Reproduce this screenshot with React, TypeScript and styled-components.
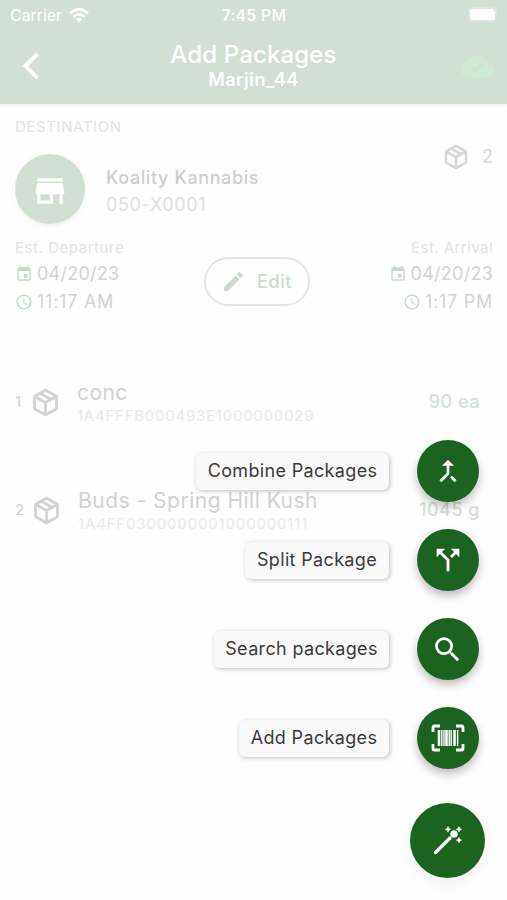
import React from "react";
import styled, { createGlobalStyle } from "styled-components";
import {
  MdAccessTime,
  MdCallMerge,
  MdCallSplit,
  MdCloudDone,
  MdEdit,
  MdEvent,
  MdSearch,
  MdStore,
} from "react-icons/md";

const Global = createGlobalStyle`
  *, *::before, *::after { box-sizing: border-box; }
  body { margin: 0; background: #fefefe; font-family: Inter, "Liberation Sans", sans-serif; }
  svg { display: block; flex: none; }
`;

const Screen = styled.main`
  position: relative;
  width: 507px;
  height: 900px;
  overflow: hidden;
  background: #fefefe;
`;

const Header = styled.header`
  height: 104px;
  background: #d2dfd3;
  color: #fff;
  box-shadow: 0 1px 4px rgba(0, 0, 0, 0.08);
`;

const StatusBar = styled.div`
  display: grid;
  grid-template-columns: 1fr auto 1fr;
  align-items: center;
  height: 30px;
  padding: 0 9px 0 10px;
`;

const Carrier = styled.div`
  display: flex;
  align-items: center;
  gap: 7px;
`;

const Battery = styled.div`
  justify-self: end;
  width: 29px;
  height: 15px;
  margin: -2px 1px 0 0;
  border: 2px solid #d9e8da;
  border-radius: 5px;
  background: #fff;
`;

const TitleBar = styled.div`
  display: grid;
  grid-template-columns: 60px 1fr 60px;
  align-items: center;
  height: 72px;
`;

const Titles = styled.div`
  display: flex;
  flex-direction: column;
  align-items: center;
  padding-top: 2px;
`;

const Side = styled.div<{ $end?: boolean }>`
  display: flex;
  justify-content: ${(p) => (p.$end ? "flex-end" : "flex-start")};
  padding: ${(p) => (p.$end ? "0 13px 0 0" : "0 0 0 21px")};
  color: #d0e9d3;
`;

const Label = styled.span<{
  $size: number;
  $line?: number;
  $color?: string;
  $weight?: number;
  $spacing?: number;
}>`
  font-size: ${(p) => p.$size}px;
  line-height: ${(p) => p.$line ?? 24}px;
  color: ${(p) => p.$color ?? "inherit"};
  font-weight: ${(p) => p.$weight ?? 400};
  letter-spacing: ${(p) => p.$spacing ?? 0}px;
  white-space: nowrap;
`;

const Destination = styled.section`
  display: flex;
  flex-direction: column;
  height: 134px;
  padding: 12px 14px 0 15px;
`;

const PlaceRow = styled.div`
  display: flex;
  align-items: flex-start;
  padding-top: 17px;
`;

const StoreBadge = styled.div`
  display: flex;
  align-items: center;
  justify-content: center;
  width: 70px;
  height: 70px;
  border-radius: 50%;
  background: #d1dfd2;
  color: #fff;
  box-shadow: 0 2px 4px rgba(0, 0, 0, 0.06);

  > svg { margin-top: 3px; }
`;

const PlaceText = styled.div`
  display: flex;
  flex: 1;
  flex-direction: column;
  gap: 3px;
  padding: 12px 0 0 21px;
`;

const Count = styled.div`
  display: flex;
  align-items: center;
  gap: 11px;
  margin-top: -12px;
  color: #d6d6d6;
`;

const Schedule = styled.section`
  display: grid;
  grid-template-columns: 1fr 106px 1fr;
  height: 130px;
  padding: 0 14px 0 15px;
`;

const Times = styled.div<{ $end?: boolean }>`
  display: flex;
  flex-direction: column;
  align-items: ${(p) => (p.$end ? "flex-end" : "flex-start")};

  > :first-child { margin-bottom: 2px; }
`;

const TimeRow = styled.div`
  display: flex;
  align-items: center;
  gap: 4px;
  height: 28px;
  color: #c9dccb;
`;

const EditButton = styled.button`
  display: flex;
  align-items: center;
  gap: 11px;
  width: 106px;
  height: 49px;
  margin: 19px 0 0 3px;
  padding: 0 0 0 15px;
  border: 2px solid #dfe9e0;
  border-radius: 25px;
  background: transparent;
  color: #cddbce;
  font-family: inherit;
`;

const PackageRow = styled.article<{ $first?: boolean }>`
  display: flex;
  align-items: flex-start;
  height: 108px;
  padding: 11px 27px 0 15px;
  color: #d2d2d2;

  > svg { margin: 7px 0 0 ${(p) => (p.$first ? 5 : 6)}px; }
`;

const Index = styled.div`
  width: 9px;
  padding-top: 11px;
`;

const PackageText = styled.div`
  display: flex;
  flex: 1;
  flex-direction: column;
  padding-left: 15px;
`;

const Amount = styled.div`
  padding-top: 11px;
`;

const SpeedDial = styled.nav`
  position: absolute;
  right: 22px;
  bottom: 22px;
  display: flex;
  flex-direction: column;
  align-items: flex-end;
`;

const Action = styled.div`
  display: flex;
  align-items: center;
  gap: 28px;
  height: 62px;
  margin: 0 6px 27px 0;
`;

const ActionLabel = styled.div<{ $width: number }>`
  display: flex;
  align-items: center;
  justify-content: center;
  width: ${(p) => p.$width}px;
  height: 37px;
  border-radius: 6px;
  background: #fafafa;
  box-shadow: 1px 1px 4px rgba(0, 0, 0, 0.26);
`;

const RoundButton = styled.button<{ $size: number }>`
  display: flex;
  align-items: center;
  justify-content: center;
  width: ${(p) => p.$size}px;
  height: ${(p) => p.$size}px;
  padding: 0;
  border: 0;
  border-radius: 50%;
  background: #1b6420;
  color: #fff;
  box-shadow: ${(p) =>
    p.$size > 70 ? "0 6px 14px rgba(0,0,0,0.05)" : "0 5px 9px rgba(0,0,0,0.25)"};

  > svg {
    margin-right: 1px;
  }
`;

const MainButton = styled(RoundButton)`
  margin-top: 7px;
`;

const BoxIcon = ({ size }: { size: number }) => (
  <svg width={size} height={size} viewBox="0 0 24 24" fill="currentColor">
    <path d="M21,16.5C21,16.88 20.79,17.21 20.47,17.38L12.57,21.82C12.41,21.94 12.21,22 12,22C11.79,22 11.59,21.94 11.43,21.82L3.53,17.38C3.21,17.21 3,16.88 3,16.5V7.5C3,7.12 3.21,6.79 3.53,6.62L11.43,2.18C11.59,2.06 11.79,2 12,2C12.21,2 12.41,2.06 12.57,2.18L20.47,6.62C20.79,6.79 21,7.12 21,7.5V16.5M12,4.15L10.11,5.22L16,8.61L17.96,7.5L12,4.15M6.04,7.5L12,10.85L13.96,9.75L8.08,6.35L6.04,7.5M5,15.91L11,19.29V12.58L5,9.21V15.91M19,15.91V9.21L13,12.58V19.29L19,15.91Z" />
  </svg>
);

const BackIcon = () => (
  <svg width="20" height="28" viewBox="0 0 20 28" fill="none" stroke="#fff" strokeWidth="4">
    <path d="M16.5 2L4.5 14L16.5 26" />
  </svg>
);

const WifiIcon = () => (
  <svg width="20" height="15" viewBox="0 0 20 15" fill="none" stroke="#fff" strokeWidth="2.7">
    <path d="M1 5.3Q10-2.3 19 5.3M4.2 8.8Q10 3.8 15.8 8.8" />
    <path d="M6.8 11.2Q10 8.5 13.2 11.2L10 14.5Z" fill="#fff" stroke="none" />
  </svg>
);

const BarcodeIcon = () => (
  <svg width="34" height="28" viewBox="0 0 34 28" fill="none" stroke="#fff">
    <path
      d="M2 8V3.5Q2 2 3.5 2H9M25 2h5.5Q32 2 32 3.5V8M32 20v4.5Q32 26 30.5 26H25M9 26H3.5Q2 26 2 24.5V20"
      strokeWidth="2.8"
    />
    <path d="M8 6v16M15.5 6v16M23.5 6v16" strokeWidth="2.6" />
    <path d="M10.8 6v16M13 6v16M18.2 6v16M20.2 6v16M26.6 6v16" strokeWidth="1.4" />
  </svg>
);

const WandIcon = () => (
  <svg width="30" height="30" viewBox="0 0 30 30" fill="#fff" stroke="#fff">
    <path d="M3.5 26.5L18 12" strokeWidth="3.2" strokeLinecap="round" />
    <circle cx="22" cy="8" r="3.5" strokeWidth="0.4" />
    <path
      d="M16 .5l.9 1.9 1.9.9-1.9.9-.9 1.9-.9-1.9-1.9-.9 1.9-.9zM27 .5l.9 1.9 1.9.9-1.9.9-.9 1.9-.9-1.9-1.9-.9 1.9-.9zM27 11.3l.9 1.9 1.9.9-1.9.9-.9 1.9-.9-1.9-1.9-.9 1.9-.9z"
      strokeWidth="0.5"
    />
  </svg>
);

const actions = [
  { text: "Combine Packages", width: 193, icon: <MdCallMerge size={32} /> },
  { text: "Split Package", width: 144, icon: <MdCallSplit size={34} /> },
  { text: "Search packages", width: 175, icon: <MdSearch size={33} /> },
  { text: "Add Packages", width: 150, icon: <BarcodeIcon /> },
];

const packages = [
  { name: "conc", tag: "1A4FFFB000493E1000000029", amount: "90 ea", nameSpacing: 0.4, tagSpacing: 0.76 },
  { name: "Buds - Spring Hill Kush", tag: "1A4FF0300000001000000111", amount: "1045 g", nameSpacing: 0.5, tagSpacing: 0.84 },
];

const TimeBlock = (p: { title: string; date: string; time: string; end?: boolean }) => (
  <Times $end={p.end}>
    <Label $size={15} $line={20} $color="#e3e3e3" $spacing={p.end ? 0.45 : 0.55}>{p.title}</Label>
    <TimeRow>
      <MdEvent size={18} />
      <Label $size={18} $color="#d3d3d3" $spacing={0.25}>{p.date}</Label>
    </TimeRow>
    <TimeRow>
      <MdAccessTime size={18} />
      <Label $size={18} $color="#d3d3d3" $spacing={0.75}>{p.time}</Label>
    </TimeRow>
  </Times>
);

export default function App() {
  return (
    <Screen>
      <Global />
      <Header>
        <StatusBar>
          <Carrier>
            <Label $size={16} $spacing={-0.05}>Carrier</Label>
            <WifiIcon />
          </Carrier>
          <Label $size={16} $weight={500} $spacing={0.25}>7:45 PM</Label>
          <Battery />
        </StatusBar>
        <TitleBar>
          <Side><BackIcon /></Side>
          <Titles>
            <Label $size={24} $line={26} $weight={500} $spacing={0.15}>Add Packages</Label>
            <Label $size={18} $line={24} $weight={600} $spacing={0.5}>Marjin_44</Label>
          </Titles>
          <Side $end><MdCloudDone size={33} /></Side>
        </TitleBar>
      </Header>

      <Destination>
        <Label $size={15} $line={21} $color="#e3e3e3" $spacing={0.6}>DESTINATION</Label>
        <PlaceRow>
          <StoreBadge><MdStore size={38} /></StoreBadge>
          <PlaceText>
            <Label $size={18} $color="#cecece" $weight={500} $spacing={0.6}>Koality Kannabis</Label>
            <Label $size={18} $color="#e0e0e0" $spacing={0.65}>050-X0001</Label>
          </PlaceText>
          <Count>
            <BoxIcon size={30} />
            <Label $size={18}>2</Label>
          </Count>
        </PlaceRow>
      </Destination>

      <Schedule>
        <TimeBlock title="Est. Departure" date="04/20/23" time="11:17 AM" />
        <EditButton>
          <MdEdit size={25} />
          <Label $size={18} $weight={500} $spacing={0.6}>Edit</Label>
        </EditButton>
        <TimeBlock title="Est. Arrival" date="04/20/23" time="1:17 PM" end />
      </Schedule>

      {packages.map((item, i) => (
        <PackageRow key={item.tag} $first={i === 0}>
          <Index><Label $size={15}>{i + 1}</Label></Index>
          <BoxIcon size={33} />
          <PackageText>
            <Label $size={21} $line={28} $spacing={item.nameSpacing}>{item.name}</Label>
            <Label $size={15} $line={18} $color="#e9e9e9" $spacing={item.tagSpacing}>{item.tag}</Label>
          </PackageText>
          <Amount><Label $size={18} $color="#d4dfd5" $weight={500} $spacing={0.5}>{item.amount}</Label></Amount>
        </PackageRow>
      ))}

      <SpeedDial>
        {actions.map((a) => (
          <Action key={a.text}>
            <ActionLabel $width={a.width}>
              <Label $size={18} $color="#3a3a3a" $spacing={0.34}>{a.text}</Label>
            </ActionLabel>
            <RoundButton $size={62}>{a.icon}</RoundButton>
          </Action>
        ))}
        <MainButton $size={75}><WandIcon /></MainButton>
      </SpeedDial>
    </Screen>
  );
}
